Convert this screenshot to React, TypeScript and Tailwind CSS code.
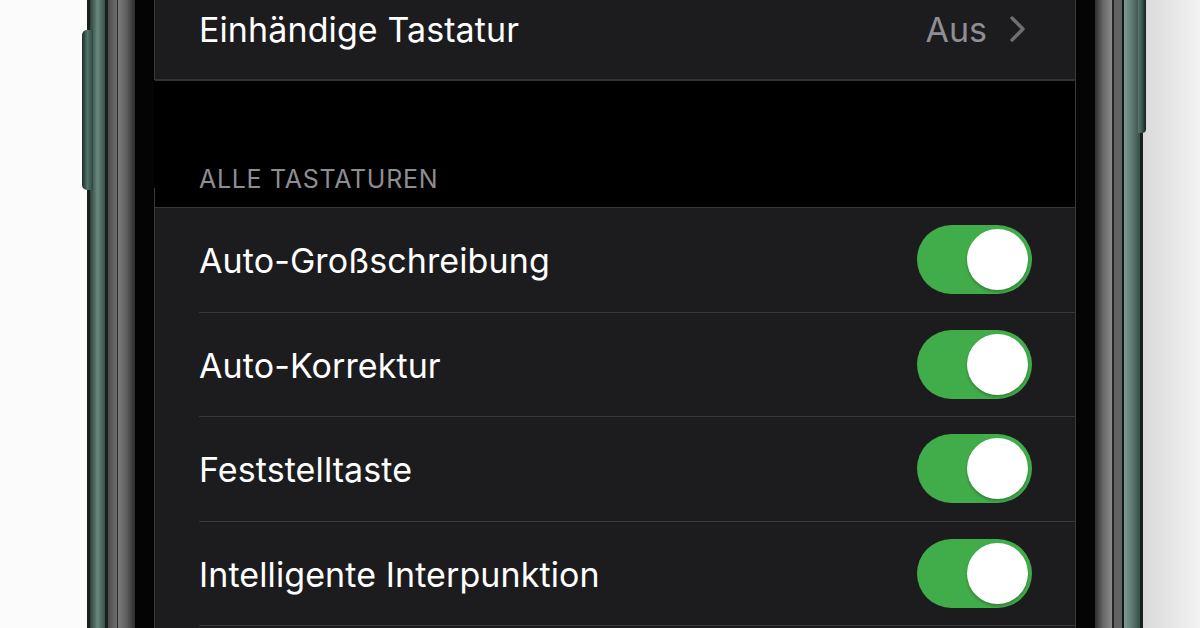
import React from 'react';

const rows = ['Auto-Großschreibung', 'Auto-Korrektur', 'Feststelltaste', 'Intelligente Interpunktion'];

const Toggle: React.FC = () => (
  <div className="w-[115px] h-[69px] rounded-full bg-[#41ad4a] flex items-center justify-end pr-[4px] shrink-0">
    <div className="w-[61px] h-[61px] rounded-full bg-white shadow-[0_2px_3px_rgba(0,0,0,0.25)]" />
  </div>
);

const Chevron: React.FC = () => (
  <svg width="18" height="28" viewBox="0 0 18 28" className="shrink-0">
    <path d="M3 3 L14 14 L3 25" fill="none" stroke="#6e6e73" strokeWidth="3.4" strokeLinecap="round" strokeLinejoin="round" />
  </svg>
);

const App: React.FC = () => {
  return (
    <div className="relative w-[1200px] h-[628px] overflow-hidden flex" style={{ fontFamily: 'Inter, "Liberation Sans", sans-serif' }}>
      {/* left background + frame */}
      <div className="w-[87px] h-full bg-[#fbfbfb]" />
      <div className="w-[3px] h-full bg-[#17201d]" />
      <div className="w-[15px] h-full bg-gradient-to-r from-[#2c423c] via-[#6a877e] to-[#3a524b]" />
      <div className="w-[3px] h-full bg-[#1a1e1d]" />
      <div className="w-[9px] h-full bg-gradient-to-r from-[#4a4a4a] to-[#707070]" />
      <div className="w-[1px] h-full bg-[#262626]" />
      <div className="w-[17px] h-full bg-gradient-to-r from-[#7c7c7c] via-[#5e5e5e] to-[#2e2e2e]" />
      <div className="w-[19px] h-full bg-[#040404]" />
      <div className="w-[1px] h-full flex flex-col">
        <div className="h-[80px] bg-[#3a3a3c]" />
        <div className="h-[108px] bg-black" />
        <div className="flex-1 bg-[#3a3a3c]" />
      </div>

      {/* screen */}
      <div className="w-[920px] h-full bg-black flex flex-col text-white">
        <div className="h-[79px] bg-[#1c1c1e] flex items-center pl-[44px] pr-[48px] pb-[21px]">
          <span className="flex-1 text-[34px] leading-none tracking-[0.1px] pt-[2px]">Einhändige Tastatur</span>
          <span className="text-[34px] leading-none text-[#8e8e93] mr-[22px] pt-[2px]">Aus</span>
          <Chevron />
        </div>
        <div className="h-[2px] bg-[#333335]" />
        <div className="h-[126px] flex items-end pl-[44px] pb-[15px]">
          <span className="text-[25px] leading-none text-[#8d8d93] tracking-[0.7px]">ALLE TASTATUREN</span>
        </div>
        <div className="border-t border-[#38383a] bg-[#1c1c1e] flex-1 flex flex-col">
          {rows.map((label) => (
            <div key={label} className="h-[104.5px] pl-[44px] shrink-0 flex flex-col">
              <div className="flex-1 flex items-center pr-[43px]">
                <span className="flex-1 text-[34px] leading-none tracking-[0.1px] pt-[3px]">{label}</span>
                <Toggle />
              </div>
              <div className="h-[1px] bg-[#38383a]" />
            </div>
          ))}
        </div>
      </div>

      {/* right frame + background */}
      <div className="w-[1px] h-full bg-[#3a3a3c]" />
      <div className="w-[19px] h-full bg-[#040404]" />
      <div className="w-[17px] h-full bg-gradient-to-r from-[#2e2e2e] via-[#6a6a6a] to-[#8a8a8a]" />
      <div className="w-[2px] h-full bg-[#262626]" />
      <div className="w-[8px] h-full bg-[#626262]" />
      <div className="w-[2px] h-full bg-[#161616]" />
      <div className="w-[16px] h-full bg-gradient-to-r from-[#7f9a92] via-[#5e7a72] to-[#364e48]" />
      <div className="w-[3px] h-full bg-[#17201d]" />
      <div className="flex-1 h-full bg-gradient-to-r from-[#d9d9d9] to-[#f3f3f3]" />

      {/* side buttons */}
      <div className="absolute left-[82px] top-[30px] w-[11px] h-[160px] rounded-l-[5px] bg-gradient-to-r from-[#1e2e2a] via-[#55736a] to-[#2f4640]" />
      <div className="absolute left-[1138px] top-[-10px] w-[8px] h-[143px] rounded-r-[4px] bg-gradient-to-r from-[#5a766e] via-[#3a5650] to-[#16201d]" />
    </div>
  );
};

export default App;
